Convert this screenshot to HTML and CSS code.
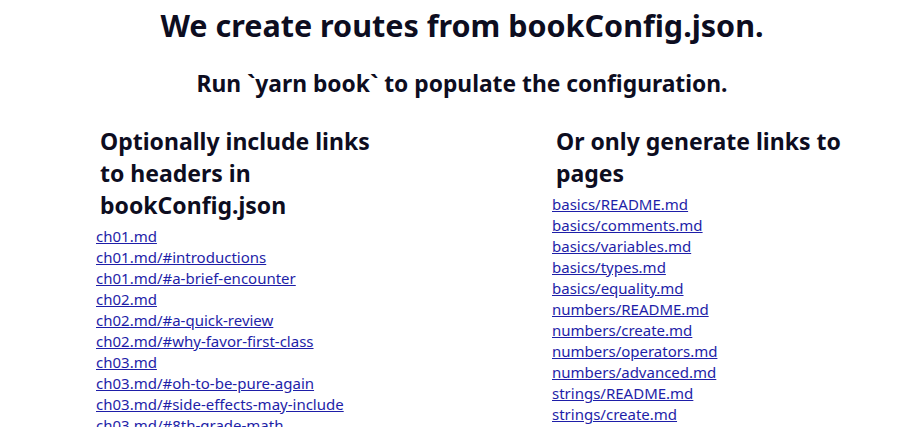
FILE: index.html
```html
<!DOCTYPE html>
<html>
<head>
<meta charset="utf-8">
<link rel="stylesheet" href="styles.css">
</head>
<body>
<div class="page">
  <h1 class="title">We create routes from bookConfig.json.</h1>
  <h2 class="subtitle">Run `yarn book` to populate the configuration.</h2>
  <div class="columns">
    <div class="col">
      <h3 class="col-head">Optionally include links to headers in bookConfig.json</h3>
      <ul class="links">
        <li><a href="#">ch01.md</a></li>
        <li><a href="#">ch01.md/#introductions</a></li>
        <li><a href="#">ch01.md/#a-brief-encounter</a></li>
        <li><a href="#">ch02.md</a></li>
        <li><a href="#">ch02.md/#a-quick-review</a></li>
        <li><a href="#">ch02.md/#why-favor-first-class</a></li>
        <li><a href="#">ch03.md</a></li>
        <li><a href="#">ch03.md/#oh-to-be-pure-again</a></li>
        <li><a href="#">ch03.md/#side-effects-may-include</a></li>
        <li><a href="#">ch03.md/#8th-grade-math</a></li>
      </ul>
    </div>
    <div class="col">
      <h3 class="col-head">Or only generate links to pages</h3>
      <ul class="links">
        <li><a href="#">basics/README.md</a></li>
        <li><a href="#">basics/comments.md</a></li>
        <li><a href="#">basics/variables.md</a></li>
        <li><a href="#">basics/types.md</a></li>
        <li><a href="#">basics/equality.md</a></li>
        <li><a href="#">numbers/README.md</a></li>
        <li><a href="#">numbers/create.md</a></li>
        <li><a href="#">numbers/operators.md</a></li>
        <li><a href="#">numbers/advanced.md</a></li>
        <li><a href="#">strings/README.md</a></li>
        <li><a href="#">strings/create.md</a></li>
      </ul>
    </div>
  </div>
</div>
</body>
</html>
```

FILE: styles.css
```css
html, body {
  margin: 0;
  padding: 0;
  background: #ffffff;
  overflow: hidden;
}
body {
  font-family: "Noto Sans", "Open Sans", sans-serif;
  color: #0d0d1f;
}
.page {
  width: 924px;
  height: 427px;
  overflow: hidden;
}
.title {
  margin: 0;
  padding-top: 6px;
  font-size: 30.5px;
  line-height: 38px;
  font-weight: 700;
  text-align: center;
}
.subtitle {
  margin: 25px 0 0;
  font-size: 22.8px;
  line-height: 30px;
  font-weight: 700;
  text-align: center;
}
.columns {
  display: grid;
  grid-template-columns: 456px 300px;
  padding-left: 96px;
  margin-top: 26px;
}
.col-head {
  margin: 0 0 5px;
  padding: 0 4px;
  width: 288px;
  font-size: 23px;
  line-height: 32px;
  font-weight: 700;
}
.links {
  list-style: none;
  margin: 0;
  padding: 0;
}
.links li {
  font-size: 15px;
  line-height: 21px;
}
.links a {
  color: #1e1ea8;
  text-decoration: underline;
}
```
